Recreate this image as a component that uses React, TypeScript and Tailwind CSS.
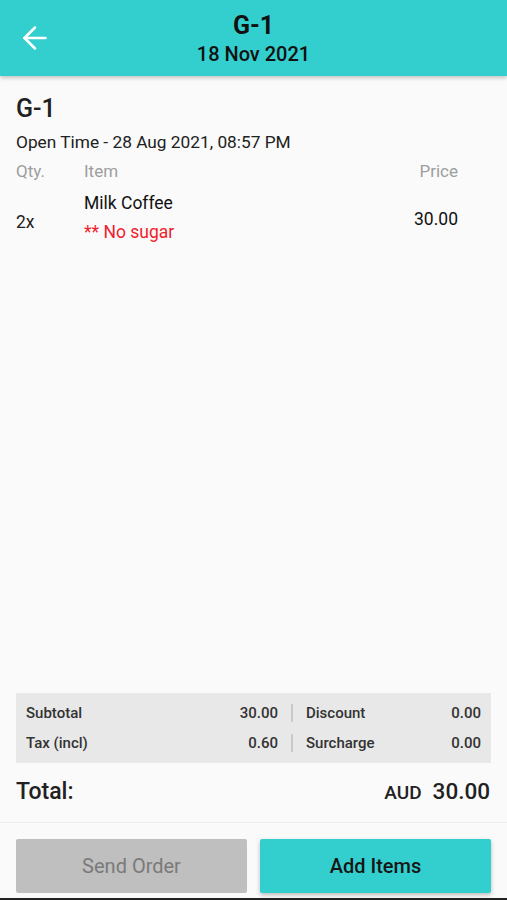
import { ArrowLeft } from 'lucide-react';

// Order summary lines
const summaryRows = [
  { left: 'Subtotal', leftValue: '30.00', right: 'Discount', rightValue: '0.00' },
  { left: 'Tax (incl)', leftValue: '0.60', right: 'Surcharge', rightValue: '0.00' },
];

export default function App() {
  return (
    <div
      className="h-[900px] w-full flex flex-col bg-[#fafafa] text-[#212121] overflow-hidden"
      style={{ fontFamily: 'Roboto, "Noto Sans", sans-serif' }}
    >
      {/* Header */}
      <header className="relative h-[76px] shrink-0 bg-[#33cfcf] shadow-[0_2px_4px_rgba(0,0,0,0.22)] z-10 flex flex-col items-center pt-[11px]">
        <button className="absolute left-[17px] top-[20px] text-white">
          <ArrowLeft size={36} strokeWidth={1.7} />
        </button>
        <div className="h-[30px] leading-[30px] text-[25px] font-bold text-[#111]">G-1</div>
        <div className="h-[24px] mt-[1px] leading-[24px] text-[20px] font-medium text-[#111]">18 Nov 2021</div>
      </header>

      {/* Order details */}
      <main className="flex-1 px-4 pt-[18px]">
        <h1 className="h-[30px] leading-[30px] text-[25px] font-medium">G-1</h1>
        <p className="h-[24px] mt-[6px] leading-[24px] text-[17.3px]">Open Time - 28 Aug 2021, 08:57 PM</p>

        <div className="flex mt-[6px] h-[22px] leading-[22px] text-[17px] text-[#9e9e9e] pr-[33px]">
          <span className="w-[68px]">Qty.</span>
          <span className="flex-1">Item</span>
          <span>Price</span>
        </div>

        <div className="flex items-start mt-[10px] text-[17.5px] pr-[33px]">
          <span className="w-[68px] h-[22px] leading-[22px] mt-[19px]">2x</span>
          <div className="flex-1">
            <div className="h-[22px] leading-[22px] text-[#111]">Milk Coffee</div>
            <div className="h-[22px] leading-[22px] mt-[7px] text-[#f0202a]">** No sugar</div>
          </div>
          <span className="h-[22px] leading-[22px] mt-[16px] text-[#111]">30.00</span>
        </div>
      </main>

      {/* Totals */}
      <section className="mx-4 h-[70px] bg-[#e8e8e8] px-[10px] py-[5px] text-[15px] font-medium text-[#333]">
        {summaryRows.map((row) => (
          <div key={row.left} className="flex items-center h-[30px]">
            <div className="w-[252px] flex justify-between">
              <span>{row.left}</span>
              <span>{row.leftValue}</span>
            </div>
            <div className="w-[2px] h-[18px] bg-[#c9c9c9] mx-[13px]" />
            <div className="flex-1 flex justify-between">
              <span>{row.right}</span>
              <span>{row.rightValue}</span>
            </div>
          </div>
        ))}
      </section>

      <div className="px-4 mt-[12px] pb-[17px] flex items-baseline justify-between h-[47px]">
        <span className="text-[23px] font-medium leading-[30px]">Total:</span>
        <div className="flex items-baseline gap-[11px] pr-[1px]">
          <span className="text-[19px] font-medium">AUD</span>
          <span className="text-[22.5px] font-medium">30.00</span>
        </div>
      </div>

      {/* Actions */}
      <div className="border-t border-[#eeeeee] px-4 pt-[16px] pb-[5px] flex gap-[13px]">
        <button className="flex-1 h-[54px] rounded-[2px] bg-[#bfbfbf] text-[20px] text-[#7a7a7a]">
          Send Order
        </button>
        <button className="flex-1 h-[54px] rounded-[2px] bg-[#33cfcf] text-[20px] font-medium text-[#161616] shadow-[0_2px_4px_rgba(0,0,0,0.25)]">
          Add Items
        </button>
      </div>
      <div className="h-[2px] shrink-0 bg-[#222]" />
    </div>
  );
}
